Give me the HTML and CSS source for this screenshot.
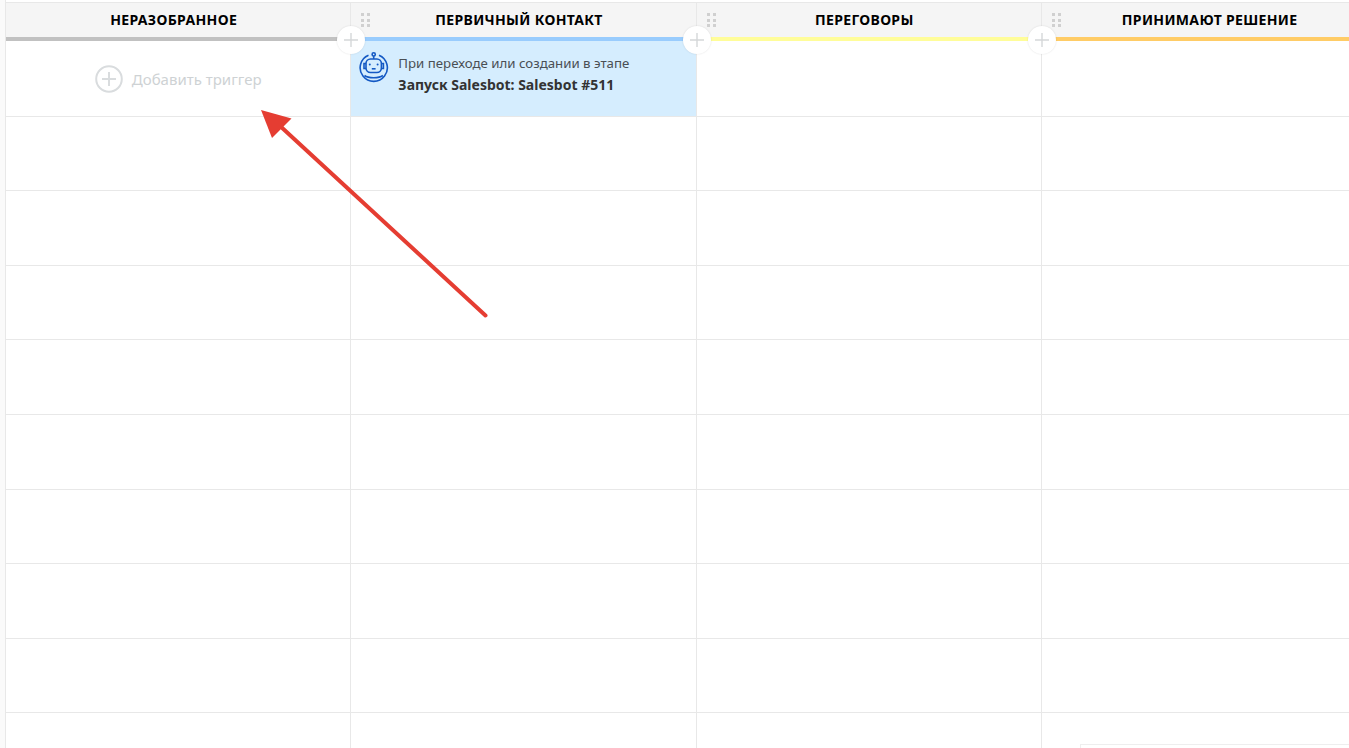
FILE: index.html
```html
<!DOCTYPE html>
<html lang="ru">
<head>
  <meta charset="UTF-8">
  <title>Триггеры</title>
  <link rel="stylesheet" href="styles.css">
</head>
<body>
  <div class="board">
    <!-- Неразобранное -->
    <div class="column">
      <div class="head head-gray"><span class="title">Неразобранное</span></div>
      <div class="cell cell-first add-trigger">
        <svg class="add-icon" width="28" height="28" viewBox="0 0 28 28"><circle cx="14" cy="14" r="12.8" fill="none" stroke="#d9dcde" stroke-width="2"/><path d="M14 7v14M7 14h14" stroke="#d9dcde" stroke-width="2"/></svg>
        <span class="add-text">Добавить триггер</span>
      </div>
      <div class="cell"></div><div class="cell"></div><div class="cell"></div><div class="cell"></div>
      <div class="cell"></div><div class="cell"></div><div class="cell"></div><div class="cell"></div><div class="cell"></div>
    </div>

    <!-- Первичный контакт -->
    <div class="column">
      <div class="head head-blue">
        <span class="grip"><i></i><i></i><i></i><i></i><i></i><i></i></span>
        <span class="title">Первичный контакт</span>
        <span class="plus"><svg width="14" height="14" viewBox="0 0 14 14"><path d="M7 0v14M0 7h14" stroke="#d5d7d9" stroke-width="1.4"/></svg></span>
      </div>
      <div class="cell cell-first trigger">
        <svg class="bot" width="30" height="31" viewBox="0 0 30 31" fill="none" stroke="#1459c4" stroke-width="1.6">
          <circle cx="14.7" cy="2.4" r="1.6"/>
          <path d="M14.7 4v3"/>
          <path d="M9.500 3.200A13.600 13.600 0 1 0 20 3.200"/>
          <rect x="7" y="7" width="15.400" height="13.500" rx="4.500"/>
          <path d="M7 11.500H5v5h2M22.400 11.500h2v5h-2"/>
          <path d="M5.500 23.500c4 3 14.400 3 18.400 0"/>
          <path d="M12.800 16.800h3.800"/>
          <circle cx="10.800" cy="12.500" r="1" fill="#1459c4" stroke="none"/>
          <circle cx="18.600" cy="12.500" r="1" fill="#1459c4" stroke="none"/>
        </svg>
        <div class="trigger-text">
          <div class="trigger-line">При переходе или создании в этапе</div>
          <div class="trigger-name">Запуск Salesbot: Salesbot #511</div>
        </div>
      </div>
      <div class="cell"></div><div class="cell"></div><div class="cell"></div><div class="cell"></div>
      <div class="cell"></div><div class="cell"></div><div class="cell"></div><div class="cell"></div><div class="cell"></div>
    </div>

    <!-- Переговоры -->
    <div class="column">
      <div class="head head-yellow">
        <span class="grip"><i></i><i></i><i></i><i></i><i></i><i></i></span>
        <span class="title">Переговоры</span>
        <span class="plus"><svg width="14" height="14" viewBox="0 0 14 14"><path d="M7 0v14M0 7h14" stroke="#d5d7d9" stroke-width="1.4"/></svg></span>
      </div>
      <div class="cell cell-first"></div>
      <div class="cell"></div><div class="cell"></div><div class="cell"></div><div class="cell"></div>
      <div class="cell"></div><div class="cell"></div><div class="cell"></div><div class="cell"></div><div class="cell"></div>
    </div>

    <!-- Принимают решение -->
    <div class="column">
      <div class="head head-orange">
        <span class="grip"><i></i><i></i><i></i><i></i><i></i><i></i></span>
        <span class="title">Принимают решение</span>
        <span class="plus"><svg width="14" height="14" viewBox="0 0 14 14"><path d="M7 0v14M0 7h14" stroke="#d5d7d9" stroke-width="1.4"/></svg></span>
      </div>
      <div class="cell cell-first"></div>
      <div class="cell"></div><div class="cell"></div><div class="cell"></div><div class="cell"></div>
      <div class="cell"></div><div class="cell"></div><div class="cell"></div><div class="cell"></div><div class="cell"></div>
    </div>
  </div>

  <!-- Стрелка поверх доски -->
  <svg class="arrow" width="1349" height="748" viewBox="0 0 1349 748">
    <path d="M485.5 315.5L279 125" stroke="#e53d32" stroke-width="4" stroke-linecap="round" fill="none"/>
    <path d="M261 110L291.5 118.5L272 138Z" fill="#e53d32"/>
  </svg>

  <div class="corner-box"></div>
</body>
</html>
```

FILE: styles.css
```css
* {
  margin: 0;
  padding: 0;
  box-sizing: border-box;
}

html, body {
  height: 100%;
  overflow: hidden;
}

body {
  background: #fff;
  font-family: "Noto Sans", Arial, sans-serif;
  color: #333;
}

/* Доска */
.board {
  display: flex;
  width: 1349px;
  height: 748px;
  padding: 2px 0 0 1px;
  background: #fff;
  border-left: 5px solid #fafafa;
  overflow: hidden;
  box-shadow: inset 1px 0 0 #e8e8e8;
}

.column {
  flex: 0 0 345.33px;
  border-right: 1px solid #e8e8e8;
}

/* Шапка колонки */
.head {
  position: relative;
  display: flex;
  align-items: center;
  justify-content: center;
  height: 39px;
  margin-right: -1px;
  padding: 0 9px 2px 0;
  background: #f5f5f5;
  border-top: 1px solid #e8e8e8;
  border-right: 1px solid #e8e8e8;
  border-bottom: 4px solid #c1c1c1;
}
.head-gray { border-bottom-color: #c1c1c1; }
.head-blue { border-bottom-color: #99ccfd; }
.head-yellow { border-bottom-color: #fffd99; }
.head-orange { border-bottom-color: #ffcc66; }

.title {
  font-size: 14px;
  font-weight: 700;
  letter-spacing: 0.33px;
  text-transform: uppercase;
  color: #000;
}

.grip {
  position: absolute;
  left: 10px;
  top: 10px;
  display: grid;
  grid-template-columns: 3px 3px;
  gap: 2.5px 3px;
}
.grip i {
  display: block;
  width: 3px;
  height: 3px;
  background: #d0d0d0;
}

.plus {
  position: absolute;
  left: -14px;
  top: 23px;
  z-index: 2;
  display: flex;
  align-items: center;
  justify-content: center;
  width: 28px;
  height: 28px;
  background: #fff;
  border-radius: 50%;
  box-shadow: 0 0 2px rgba(0, 0, 0, 0.12);
}

/* Ячейки */
.cell {
  height: 74.6px;
  border-bottom: 1px solid #e8e8e8;
}
.cell-first {
  height: 75.6px;
}

.add-trigger {
  display: flex;
  align-items: center;
  justify-content: center;
  gap: 9px;
  padding-top: 2px;
}
.add-text {
  font-size: 15px;
  color: #ced2d4;
}

.trigger {
  display: flex;
  align-items: flex-start;
  gap: 9px;
  padding: 11px 0 0 8px;
  background: #d5edfe;
}
.bot {
  flex: none;
}
.trigger-line {
  font-size: 13.25px;
  line-height: 22px;
  color: #4a4f54;
}
.trigger-name {
  font-size: 14px;
  font-weight: 700;
  line-height: 22px;
  color: #333;
}

/* То, что лежит поверх доски */
.arrow {
  position: absolute;
  left: 0;
  top: 0;
  z-index: 3;
  pointer-events: none;
}

.corner-box {
  position: absolute;
  left: 1080px;
  top: 744px;
  width: 269px;
  height: 4px;
  background: #fff;
  border-top: 1px solid #eee;
  border-left: 1px solid #eee;
}
```
